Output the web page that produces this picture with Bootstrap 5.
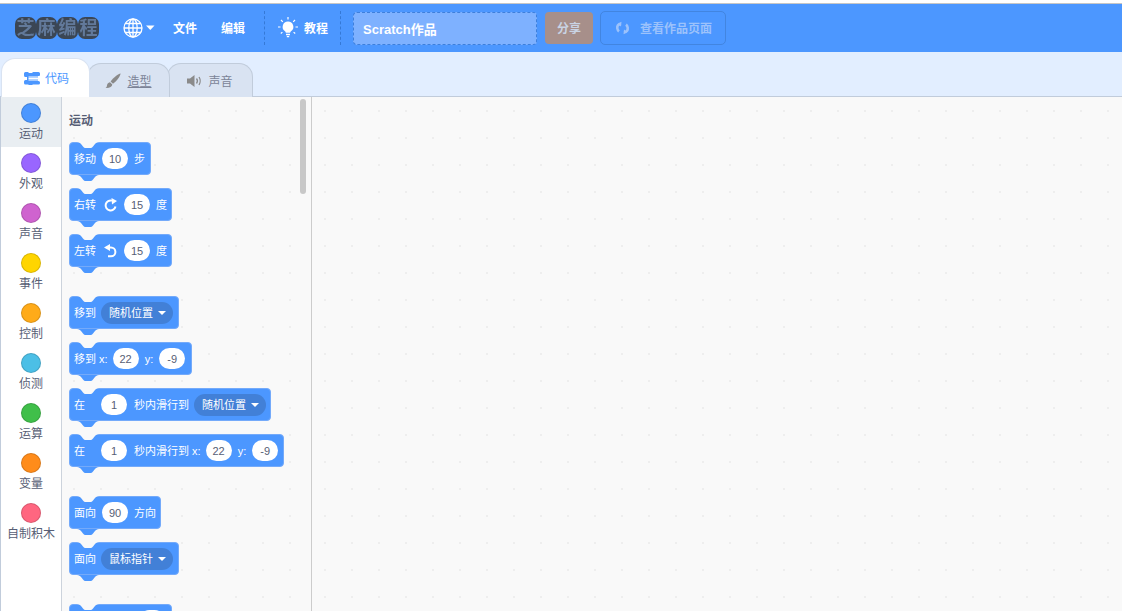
<!DOCTYPE html>
<html lang="zh">
<head>
<meta charset="utf-8">
<title>Scratch作品</title>
<link href="https://cdn.jsdelivr.net/npm/bootstrap@5.3.0/dist/css/bootstrap.min.css" rel="stylesheet">
<style>
html,body{height:611px;overflow:hidden;background:#fff}
body{font-family:"Liberation Sans","Noto Sans CJK SC",sans-serif;font-size:12px;color:#575e75;border-top:3px solid #fff}
.app-root{height:608px;border-top:1px solid #c6c6c6;overflow:hidden}
.top-bar{height:48px;background:#4c97ff;padding:0;color:#fff;flex-wrap:nowrap;justify-content:flex-start}
.logo-box{margin-left:15px;width:84px;gap:0;filter:blur(.6px)}
.logo-box span{width:21px;height:22px;background:#3b4654;border-radius:7px;color:#62799a;font-size:18px;line-height:22px;text-align:center;font-weight:700;overflow:hidden}
.globe{margin-left:24px}
.caret-w{margin-left:3px}
.menu-tx{font-weight:700;font-size:12px;color:#fff;padding-top:2px}
.m1{margin-left:18px}.m2{margin-left:24px}
.dash-l{border-left:1px dashed #2e6fc9;height:34px;margin-left:19px;opacity:.75}
.bulb{margin-left:13px}
.m3{margin-left:6px}
.dash-2{margin-left:12px}
.title-in.form-control{width:184px;height:33px;margin-left:12px;background:#7eb1ff;border:1px dashed #3d7fdc;border-radius:4px;color:#fff;font-weight:700;font-size:13px;padding:0 9px;box-shadow:none}
.share-b.btn{width:48px;height:32px;margin-left:8px;padding:2px 0 0;background:#a78f8a;border:0;border-radius:4px;color:#c9d3e4;font-size:12px;font-weight:700;opacity:1}
.see-b.btn{width:126px;height:34px;margin-left:7px;padding:0 0 0 14px;background:transparent;border:1px solid #4285e0;border-radius:5px;color:#9cc2fb;font-size:12px;font-weight:700;opacity:1;justify-content:flex-start;gap:10px}
.see-b span{padding-top:2px}
.tab-strip{height:45px;background:#e2eeff;border-bottom:1px solid #c1ccdb;padding-left:1px}
.tab-i{height:34px;width:86px;margin-left:-3px;background:#d9e3f2;border:1px solid #c1ccdb;border-bottom:0;border-radius:14px 14px 0 0;color:#7b8397;gap:6px;justify-content:center;font-size:12px;margin-bottom:-1px}
.tab-i span{padding-top:2px}
.tab-on{height:39px;width:89px;margin-left:0;background:#fff;color:#4c97ff;border-color:#d9e3f2;position:relative;z-index:2;gap:5px;padding-left:2px}
.tab-2{width:83px;position:relative;z-index:1;margin-left:-3px}
.tab-2 span{text-decoration:underline}
.tab-3{margin-left:-3px}
.editor-w{height:514px;overflow:hidden}
.cat-col{width:62px;flex:none;background:#fff;border-left:1px solid #c1ccdb;border-right:1px solid #ccd3dc;height:100%}
.cat-i{height:50px;padding-top:6px;font-size:12px;line-height:16px;color:#575e75;white-space:nowrap}
.cat-on{background:#e9eef2}
.cat-dot{width:20px;height:20px;border-radius:50%;border:1px solid rgba(0,0,0,.15);margin-bottom:3px;flex:none}
.dot-layer{background-color:#f9f9f9;background-image:radial-gradient(circle at 1px 1px,#eeeeee 0,#eeeeee 1px,transparent 1.1px);background-size:27px 27px}
.pal-col{width:250px;flex:none;border-right:1px solid #ccc;position:relative;padding:16px 0 0 7px;height:100%;overflow:hidden;background-position:11px 13px}
.work-area{flex:1;height:100%;background-position:12px 13px}
.pal-title{font-weight:700;font-size:12px;line-height:16px;color:#575e75;margin-bottom:13px}
.pal-thumb{position:absolute;left:238px;top:2px;width:6px;height:95px;border-radius:3px;background:#c8c8c8;z-index:4}
.blk{position:relative;height:33px;background:#4c97ff;border:1px solid #74aafa;border-radius:4px;color:#fff;font-size:11px;line-height:1;white-space:nowrap;padding-left:4px;margin-bottom:13px}
.blk span{padding-top:1px}
.blk::before{content:"";position:absolute;left:7px;top:-1px;width:22px;height:6px;background:#f9f9f9;clip-path:path("M0 0H22C20 0 19 1 18 2L16 4.500C15 5.500 14.500 6 13 6H9C7.500 6 7 5.500 6 4.500L4 2C3 1 2 0 0 0Z")}
.blk::after{content:"";position:absolute;left:7px;bottom:-7px;width:22px;height:6px;background:#4c97ff;clip-path:path("M0 0H22C20 0 19 1 18 2L16 4.500C15 5.500 14.500 6 13 6H9C7.500 6 7 5.500 6 4.500L4 2C3 1 2 0 0 0Z")}
.grp-gap{margin-top:29px}
.blk .num-p{width:26px;height:21px;border-radius:11px;background:#fff;color:#575e75;text-align:center;line-height:21px;flex:none}
.blk .drop-p{width:72px;height:22px;border-radius:11px;background:#4280d7;padding:0 0 0 8px;gap:5px;flex:none}
.blk .tri{width:0;height:0;padding:0;border-left:4px solid transparent;border-right:4px solid transparent;border-top:4px solid #fff}
.ml6{margin-left:6px}.ml5{margin-left:5px}.ml7{margin-left:7px}.ml8{margin-left:8px}.ml16{margin-left:16px}.ml65{margin-left:65px}
</style>
</head>
<body>
<div class="app-root">
<nav class="navbar top-bar d-flex align-items-center">
  <div class="logo-box d-flex"><span>芝</span><span>麻</span><span>编</span><span>程</span></div>
  <svg class="globe" width="20" height="20" viewBox="0 0 20 20" fill="none" stroke="#fff" stroke-width="1.3"><circle cx="10" cy="10" r="9"/><ellipse cx="10" cy="10" rx="4.2" ry="9"/><path d="M10 1v18M1 10h18M2.2 5.5h15.6M2.2 14.5h15.6"/></svg>
  <svg class="caret-w" width="9" height="6" viewBox="0 0 9 6"><path d="M0 .5h8.5L4.3 5z" fill="#fff"/></svg>
  <span class="menu-tx m1">文件</span>
  <span class="menu-tx m2">编辑</span>
  <span class="dash-l"></span>
  <svg class="bulb" width="20" height="22" viewBox="0 0 20 22" fill="#fff"><path d="M10 4.5a5.3 5.3 0 0 0-3 9.7c.6.5.8 1 .8 1.6h4.4c0-.6.2-1.1.8-1.6a5.3 5.3 0 0 0-3-9.7z"/><path d="M8 16.8h4v1.4H8zM8.8 19h2.4v1.2H8.8z"/><path d="M10 0v2.5M3 3l1.8 1.8M17 3l-1.8 1.8M0 10h2.5M17.5 10H20M2.8 16.5l1.6-1.4M17.2 16.5l-1.6-1.4" stroke="#fff" stroke-width="1.2"/></svg>
  <span class="menu-tx m3">教程</span>
  <span class="dash-l dash-2"></span>
  <input class="form-control title-in" value="Scratch作品" aria-label="作品名">
  <button class="btn share-b" type="button">分享</button>
  <button class="btn see-b d-flex align-items-center" type="button">
    <svg width="15" height="14" viewBox="0 0 15 14" fill="none" stroke="#9cc2fb" stroke-width="2.6"><path d="M6 2.600C3 3 2 5.200 2.300 7.400c.2 1.300.8 2.300 1.700 3"/><path d="M9 11.400c3-.4 4-2.600 3.700-4.800-.2-1.300-.8-2.300-1.700-3"/><path d="M6.500 0.800L3 3.200l3 2.200zM8.500 13.200L12 10.800l-3-2.200z" fill="#9cc2fb" stroke="none"/></svg>
    <span>查看作品页面</span>
  </button>
</nav>
<div class="tab-strip d-flex align-items-end">
  <div class="tab-i tab-on d-flex align-items-center">
    <svg width="16" height="13" viewBox="0 0 16 13" fill="#4c97ff"><path d="M0 1.5A1.5 1.5 0 0 1 1.5 0H4l1 1h3l1-1h5.5A1.5 1.5 0 0 1 16 1.500V3a1 1 0 0 1-1 1H5L4 5H1.500A1.500 1.500 0 0 1 0 3.500z"/><path d="M0 9.500A1.500 1.500 0 0 1 1.500 8H4l1 1h9.500A1.500 1.500 0 0 1 16 10.500V11a1.500 1.500 0 0 1-1.500 1.500H9l-1 .5H5l-1-.5H1.500A1.500 1.500 0 0 1 0 11z"/><path d="M3 4.500h11v4H3z"/><path d="M4.500 5.400h11v2.200h-11z" fill="#fff"/></svg>
    <span>代码</span>
  </div>
  <div class="tab-i tab-2 d-flex align-items-center">
    <svg width="16" height="16" viewBox="0 0 16 16" fill="#8a8a8a"><path d="M15.500.500c.4 1.500-3.500 7.500-7.500 10.300L5.600 8.500C8.500 4.500 14 .3 15.500.500z"/><path d="M5 9.200l2.300 2.300c-.3 2.300-2.700 3.800-6.800 3.500 1.800-1 1.200-2.300 1.800-3.700.5-1.200 1.500-2 2.700-2.100z"/></svg>
    <span>造型</span>
  </div>
  <div class="tab-i tab-3 d-flex align-items-center">
    <svg width="15" height="12" viewBox="0 0 15 12" fill="#8a8a8a"><path d="M0 3.500h3L7.500 0v12L3 8.500H0z"/><path d="M9.500 3.500c1 1.300 1 3.700 0 5" fill="none" stroke="#8a8a8a" stroke-width="1.300"/><path d="M12 2c1.500 2.200 1.500 5.800 0 8" fill="none" stroke="#8a8a8a" stroke-width="1.300"/></svg>
    <span>声音</span>
  </div>
</div>
<div class="editor-w d-flex">
  <div class="cat-col">
    <div class="cat-i cat-on d-flex flex-column align-items-center"><span class="cat-dot" style="background:#4c97ff"></span>运动</div>
    <div class="cat-i d-flex flex-column align-items-center"><span class="cat-dot" style="background:#9966ff"></span>外观</div>
    <div class="cat-i d-flex flex-column align-items-center"><span class="cat-dot" style="background:#cf63cf"></span>声音</div>
    <div class="cat-i d-flex flex-column align-items-center"><span class="cat-dot" style="background:#ffd500"></span>事件</div>
    <div class="cat-i d-flex flex-column align-items-center"><span class="cat-dot" style="background:#ffab19"></span>控制</div>
    <div class="cat-i d-flex flex-column align-items-center"><span class="cat-dot" style="background:#4cbfe6"></span>侦测</div>
    <div class="cat-i d-flex flex-column align-items-center"><span class="cat-dot" style="background:#40bf4a"></span>运算</div>
    <div class="cat-i d-flex flex-column align-items-center"><span class="cat-dot" style="background:#ff8c1a"></span>变量</div>
    <div class="cat-i d-flex flex-column align-items-center"><span class="cat-dot" style="background:#ff6680"></span>自制积木</div>
  </div>
  <div class="pal-col dot-layer">
    <div class="pal-thumb"></div>
    <div class="pal-title">运动</div>
    <div class="blk d-flex align-items-center" style="width:82px"><span>移动</span><span class="num-p ml6">10</span><span class="ml6">步</span></div>
    <div class="blk d-flex align-items-center" style="width:103px"><span>右转</span><svg class="ml8" width="14" height="14" viewBox="0 0 14 14" fill="none"><path d="M11.500 8.500A5 5 0 1 1 8 2.600" stroke="#fff" stroke-width="2"/><path d="M7.500 0L13 3 8 6.500z" fill="#fff"/></svg><span class="num-p ml6">15</span><span class="ml6">度</span></div>
    <div class="blk d-flex align-items-center" style="width:103px"><span>左转</span><svg class="ml8" width="14" height="14" viewBox="0 0 14 14" fill="none"><path d="M2.500 3.500h4.500a4.200 4.200 0 0 1 0 8.800H4" stroke="#fff" stroke-width="2"/><path d="M6 0L0 3.500 6 7z" fill="#fff"/></svg><span class="num-p ml6">15</span><span class="ml6">度</span></div>
    <div class="blk grp-gap d-flex align-items-center" style="width:110px"><span>移到</span><span class="drop-p ml5 d-flex align-items-center"><span>随机位置</span><span class="tri"></span></span></div>
    <div class="blk d-flex align-items-center" style="width:123px"><span>移到 x:</span><span class="num-p ml5">22</span><span class="ml6">y:</span><span class="num-p ml6">-9</span></div>
    <div class="blk d-flex align-items-center" style="width:202px"><span>在</span><span class="num-p ml16">1</span><span class="ml7">秒内滑行到</span><span class="drop-p ml5 d-flex align-items-center"><span>随机位置</span><span class="tri"></span></span></div>
    <div class="blk d-flex align-items-center" style="width:215px"><span>在</span><span class="num-p ml16">1</span><span class="ml7">秒内滑行到 x:</span><span class="num-p ml5">22</span><span class="ml6">y:</span><span class="num-p ml6">-9</span></div>
    <div class="blk grp-gap d-flex align-items-center" style="width:92px"><span>面向</span><span class="num-p ml6">90</span><span class="ml6">方向</span></div>
    <div class="blk d-flex align-items-center" style="width:110px"><span>面向</span><span class="drop-p ml5 d-flex align-items-center"><span>鼠标指针</span><span class="tri"></span></span></div>
    <div class="blk grp-gap d-flex align-items-center" style="width:103px"><span class="num-p ml65"></span></div>
  </div>
  <div class="work-area dot-layer"></div>
</div>
</div>
<script src="https://cdn.jsdelivr.net/npm/bootstrap@5.3.0/dist/js/bootstrap.bundle.min.js"></script>
</body>
</html>
